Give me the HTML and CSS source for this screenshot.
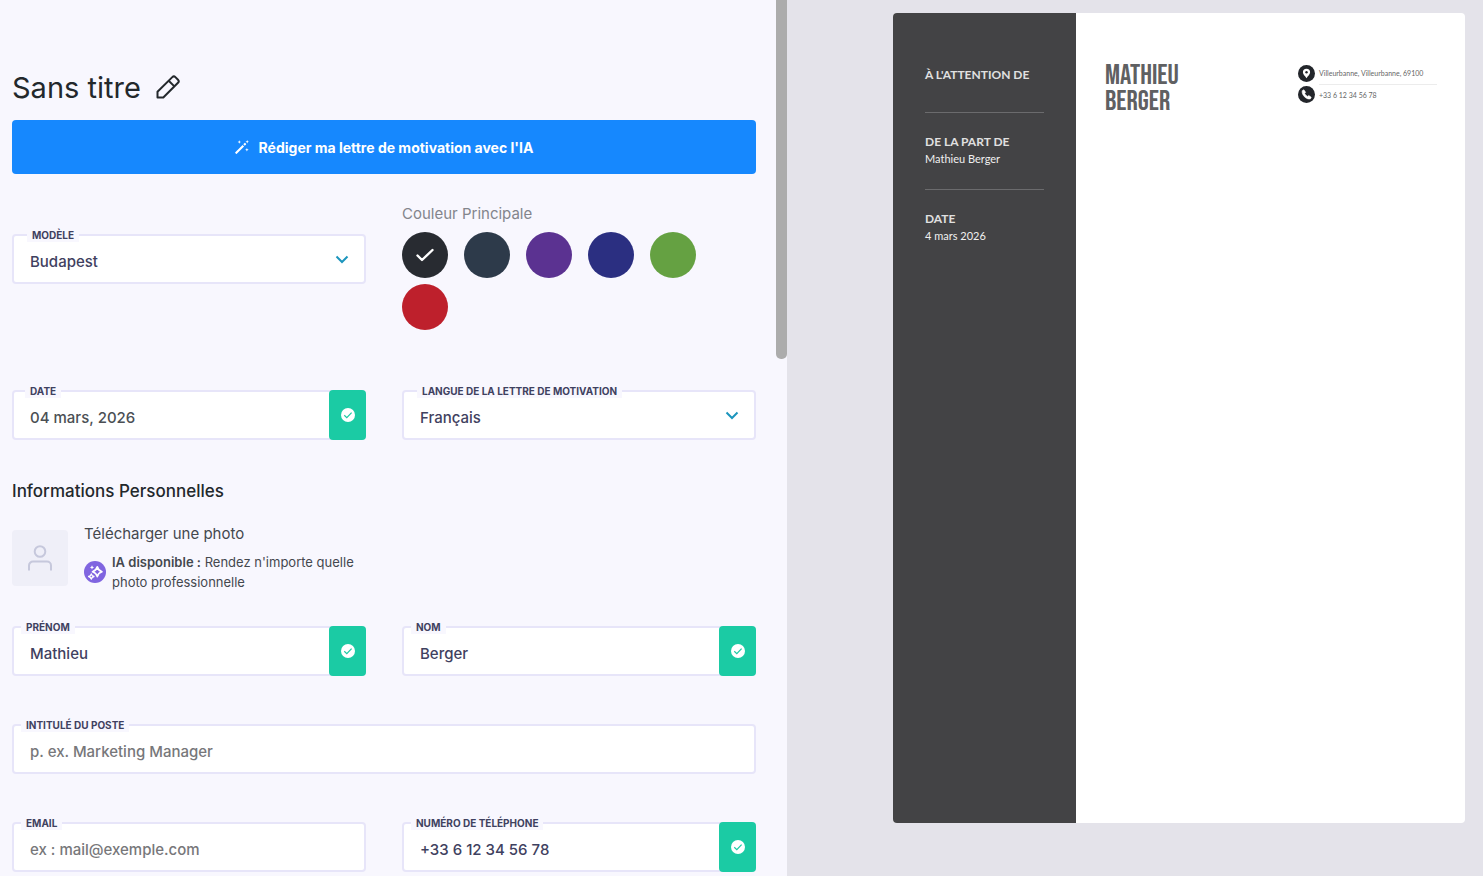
FILE: index.html
```html
<!DOCTYPE html>
<html lang="fr">
<head>
    <meta charset="UTF-8">
    <meta name="viewport" content="width=device-width, initial-scale=1.0">
    <title>Lettre de motivation</title>
    <link rel="stylesheet" href="styles.css">
</head>
<body>
    <!-- Shared icons -->
    <svg class="sprite" aria-hidden="true">
        <symbol id="chevron" viewBox="0 0 14 9">
            <path d="M1.5 1.5L7 7l5.500-5.500" fill="none" stroke="currentColor" stroke-width="2"/>
        </symbol>
        <symbol id="valid" viewBox="0 0 14 14">
            <circle cx="7" cy="7" r="7" fill="#fff"/>
            <path d="M3.300 7.300l2.500 2.300 4.800-5" fill="none" stroke="#1bcba4" stroke-width="1.200"/>
        </symbol>
    </svg>

    <div class="app">
        <main class="editor">
            <form class="form">
                <div class="title-row">
                    <h1>Sans titre</h1>
                    <button type="button" class="icon-button" aria-label="Modifier le titre">
                        <svg width="24" height="24" viewBox="0 0 24 24" fill="none" stroke="#23282c" stroke-width="2" stroke-linejoin="round">
                            <path d="M1.500 22.500v-5.800L16.300 2.100a2.200 2.200 0 0 1 3.100 0l2.600 2.600a2.200 2.200 0 0 1 0 3.100L7.300 22.500z"/>
                            <path d="M12.700 5.700l5.700 5.700"/>
                        </svg>
                    </button>
                </div>

                <button type="button" class="ai-button">
                    <svg width="14" height="14" viewBox="0 0 14 14" fill="#fff">
                        <path d="M0.300 12.200L7.600 4.900l1.500 1.500-7.300 7.300a.6.6 0 0 1-.8 0l-.7-.7a.6.6 0 0 1 0-.8z"/>
                        <path d="M8.300 4.200L9.500 3a.6.6 0 0 1 .8 0l.7.7a.6.6 0 0 1 0 .8L9.800 5.700z"/>
                        <path d="M4.300.3l.5 1.200 1.200.5-1.200.5-.5 1.200-.5-1.200L2.600 2l1.200-.5zM12.200 0l.5 1.200 1.200.5-1.200.5-.5 1.200-.5-1.200-1.200-.5 1.200-.5zM11.900 8l.5 1.300 1.300.5-1.300.5-.5 1.300-.5-1.300-1.300-.5 1.300-.5z"/>
                    </svg>
                    Rédiger ma lettre de motivation avec l'IA
                </button>

                <div class="grid design">
                    <div class="field">
                        <label class="wide" for="template">Modèle</label>
                        <select id="template"><option>Budapest</option></select>
                        <svg class="chevron" width="14" height="9"><use href="#chevron"/></svg>
                    </div>
                    <fieldset class="colors">
                        <legend>Couleur Principale</legend>
                        <div class="swatches">
                            <label class="swatch black">
                                <input type="radio" name="color" aria-label="Noir" checked>
                                <svg width="18" height="14" viewBox="0 0 18 14" fill="none" stroke="#fff" stroke-width="2.400" stroke-linecap="round" stroke-linejoin="round"><path d="M1.500 7.500l4.500 4.500L16.500 2"/></svg>
                            </label>
                            <label class="swatch slate"><input type="radio" name="color" aria-label="Ardoise"></label>
                            <label class="swatch purple"><input type="radio" name="color" aria-label="Violet"></label>
                            <label class="swatch blue"><input type="radio" name="color" aria-label="Bleu"></label>
                            <label class="swatch green"><input type="radio" name="color" aria-label="Vert"></label>
                            <label class="swatch red"><input type="radio" name="color" aria-label="Rouge"></label>
                        </div>
                    </fieldset>
                </div>

                <div class="grid">
                    <div class="field">
                        <label class="medium" for="date">Date</label>
                        <input class="date" type="text" id="date" value="04 mars, 2026">
                        <span class="valid"><svg width="14" height="14"><use href="#valid"/></svg></span>
                    </div>
                    <div class="field">
                        <label class="wide" for="language">Langue de la lettre de motivation</label>
                        <select id="language"><option>Français</option></select>
                        <svg class="chevron" width="14" height="9"><use href="#chevron"/></svg>
                    </div>
                </div>

                <h2>Informations Personnelles</h2>

                <div class="photo">
                    <button type="button" class="avatar" aria-label="Ajouter une photo">
                        <svg width="24" height="26" viewBox="0 0 24 26" fill="none" stroke="#c6c8dc" stroke-width="2">
                            <circle cx="12" cy="6.500" r="5.300"/>
                            <path d="M1 25.500v-5a4 4 0 0 1 4-4h14a4 4 0 0 1 4 4v5"/>
                        </svg>
                    </button>
                    <div class="photo-text">
                        <p class="photo-title">Télécharger une photo</p>
                        <div class="photo-ai">
                            <svg width="22" height="22" viewBox="0 0 22 22">
                                <circle cx="11" cy="11" r="11" fill="#8065e0"/>
                                <path d="M13.300 5.800c.7 3 1.700 4 4.700 4.900-3 .9-4 1.900-4.700 4.900-.8-3-1.800-4-4.800-4.900 3-.9 4-1.900 4.800-4.900z" fill="none" stroke="#fff" stroke-width="1.700" stroke-linejoin="round"/>
                                <path d="M7.300 12.800c.4 1.700 1 2.300 2.700 2.700-1.700.4-2.300 1-2.700 2.700-.4-1.700-1-2.300-2.700-2.700 1.700-.4 2.300-1 2.700-2.700z" fill="none" stroke="#fff" stroke-width="1.300" stroke-linejoin="round"/>
                                <path d="M8 4.300l.7 1.400 1.400.7-1.400.7L8 8.500l-.7-1.400-1.400-.7 1.400-.7z" fill="#fff"/>
                            </svg>
                            <p><strong>IA disponible :</strong> Rendez n'importe quelle photo professionnelle</p>
                        </div>
                    </div>
                </div>

                <div class="grid">
                    <div class="field">
                        <label for="firstname">Prénom</label>
                        <input type="text" id="firstname" value="Mathieu">
                        <span class="valid"><svg width="14" height="14"><use href="#valid"/></svg></span>
                    </div>
                    <div class="field">
                        <label for="lastname">Nom</label>
                        <input type="text" id="lastname" value="Berger">
                        <span class="valid"><svg width="14" height="14"><use href="#valid"/></svg></span>
                    </div>
                    <div class="field full">
                        <label for="job">Intitulé du poste</label>
                        <input type="text" id="job" placeholder="p. ex. Marketing Manager">
                    </div>
                    <div class="field">
                        <label for="email">Email</label>
                        <input type="email" id="email" placeholder="ex : mail@exemple.com">
                    </div>
                    <div class="field">
                        <label for="phone">Numéro de téléphone</label>
                        <input type="tel" id="phone" value="+33 6 12 34 56 78">
                        <span class="valid"><svg width="14" height="14"><use href="#valid"/></svg></span>
                    </div>
                </div>
            </form>
            <div class="scroll-thumb"></div>
        </main>

        <section class="preview">
            <article class="letter">
                <aside class="letter-side">
                    <div class="block">
                        <h3>À l'attention de</h3>
                    </div>
                    <div class="block">
                        <h3>De la part de</h3>
                        <p>Mathieu Berger</p>
                    </div>
                    <div class="block">
                        <h3>Date</h3>
                        <p>4 mars 2026</p>
                    </div>
                </aside>
                <header class="letter-head">
                    <div class="name">Mathieu Berger</div>
                    <ul class="contact">
                        <li>
                            <svg width="17" height="17" viewBox="0 0 17 17">
                                <circle cx="8.500" cy="8.500" r="8.500" fill="#23262b"/>
                                <path d="M8.500 3.700a3.600 3.600 0 0 0-3.600 3.600c0 2.300 2.100 3.500 3.600 6 1.500-2.500 3.600-3.700 3.600-6a3.600 3.600 0 0 0-3.600-3.600z" fill="#fff"/>
                                <circle cx="8.500" cy="7.300" r="1.200" fill="#23262b"/>
                            </svg>
                            <span>Villeurbanne, Villeurbanne, 69100</span>
                        </li>
                        <li>
                            <svg width="17" height="17" viewBox="0 0 17 17">
                                <circle cx="8.500" cy="8.500" r="8.500" fill="#23262b"/>
                                <path d="M4.200 4.700l1.700-.9 1.700 2.500-.9 1.200c.6 1.300 1.500 2.200 2.900 2.900l1.200-.9 2.400 1.700-.8 1.700c-4 1-9-4-8.200-8.200z" fill="#fff" stroke="#fff" stroke-width=".6" stroke-linejoin="round"/>
                            </svg>
                            <span>+33 6 12 34 56 78</span>
                        </li>
                    </ul>
                </header>
            </article>
        </section>
    </div>
</body>
</html>
```
FILE: styles.css
```css
* {
    margin: 0;
    padding: 0;
    box-sizing: border-box;
}

body {
    font-family: Inter, "Open Sans", sans-serif;
    color: #23282c;
    background: #e4e3ea;
}

button,
input,
select {
    font-family: inherit;
}

.sprite {
    display: none;
}

.app {
    display: grid;
    grid-template-columns: 787fr 696fr;
    height: 100vh;
    overflow: hidden;
}

/* Editor */
.editor {
    position: relative;
    background: #f8f7fe;
    overflow: hidden;
}

.form {
    height: 100%;
    padding: 68px 31px 32px 12px;
    overflow-y: auto;
    scrollbar-width: none;
}

.scroll-thumb {
    position: absolute;
    top: 0;
    right: 0;
    width: 11px;
    height: 41%;
    background: #acacac;
    border-radius: 0 0 5px 5px;
}

.title-row {
    display: flex;
    align-items: center;
    gap: 15px;
    height: 38px;
    margin-bottom: 14px;
}

h1 {
    font-size: 29px;
    font-weight: 400;
}

.icon-button {
    display: flex;
    background: none;
    border: none;
    cursor: pointer;
}

.ai-button {
    display: flex;
    align-items: center;
    justify-content: center;
    gap: 10px;
    width: 100%;
    height: 54px;
    margin-bottom: 30px;
    font-size: 14px;
    font-weight: 700;
    color: #fff;
    background: #1688fe;
    border: none;
    border-radius: 4px;
    cursor: pointer;
}

.grid {
    display: grid;
    grid-template-columns: 1fr 1fr;
    gap: 48px 36px;
}

.design {
    align-items: start;
    margin-bottom: 60px;
}

.design .field {
    margin-top: 30px;
}

.field {
    position: relative;
}

.full {
    grid-column: 1 / -1;
}

.field label {
    position: absolute;
    top: -6px;
    left: 9px;
    padding: 0 5px;
    font-size: 10px;
    line-height: 14px;
    font-weight: 700;
    text-transform: uppercase;
    color: #3f4160;
    background: #f8f7fe;
}

.field label.medium {
    left: 13px;
}

.field label.wide {
    left: 15px;
}

.field input,
.field select {
    display: block;
    width: 100%;
    height: 50px;
    padding: 5px 16px 0;
    font-size: 15px;
    font-weight: 500;
    color: #3f4160;
    background: #fff;
    border: 2px solid #e7e5f9;
    border-radius: 4px;
    appearance: none;
}

.field .date {
    color: #4b4f54;
}

.field input::placeholder {
    color: #77777a;
}

.chevron {
    position: absolute;
    top: 21px;
    right: 17px;
    color: #1c95bd;
    pointer-events: none;
}

.valid {
    position: absolute;
    top: 0;
    right: 0;
    display: flex;
    align-items: center;
    justify-content: center;
    width: 37px;
    height: 50px;
    background: #1bcba4;
    border-radius: 4px;
}

.colors {
    border: none;
}

.colors legend {
    margin-bottom: 8px;
    font-size: 15px;
    line-height: 20px;
    color: #83858c;
}

.swatches {
    display: flex;
    flex-wrap: wrap;
    gap: 6px 16px;
}

.swatch {
    display: grid;
    place-items: center;
    width: 46px;
    height: 46px;
    border-radius: 50%;
    cursor: pointer;
}

.swatch input,
.swatch svg {
    grid-area: 1 / 1;
}

.swatch input {
    width: 46px;
    height: 46px;
    border-radius: 50%;
    appearance: none;
}

.black { background: #282b31; }
.slate { background: #2d3a4a; }
.purple { background: #5b3291; }
.blue { background: #2b2f81; }
.green { background: #65a142; }
.red { background: #be202c; }

h2 {
    margin: 40px 0 28px;
    font-size: 17px;
    line-height: 22px;
    font-weight: 500;
}

.photo {
    display: flex;
    align-items: center;
    gap: 16px;
    height: 56px;
    margin-bottom: 40px;
}

.avatar {
    display: flex;
    align-items: center;
    justify-content: center;
    width: 56px;
    height: 56px;
    background: #efeff8;
    border: none;
    border-radius: 4px;
    cursor: pointer;
}

.photo-text {
    color: #44484e;
}

.photo-title {
    margin-bottom: 8px;
    font-size: 15px;
    line-height: 20px;
}

.photo-ai {
    display: flex;
    align-items: center;
    gap: 6px;
    max-width: 288px;
    font-size: 13px;
    line-height: 20px;
}

.photo-ai svg {
    flex: none;
}

.photo-ai strong {
    font-weight: 600;
}

/* Letter preview */
.preview {
    padding: 13px 18px 0 106px;
}

.letter {
    display: grid;
    grid-template-columns: 32% 68%;
    aspect-ratio: 572 / 810;
    font-family: Lato, sans-serif;
    background: #fff;
    border-radius: 4px;
    overflow: hidden;
}

.letter-side {
    padding: 53px 32px;
    color: #f0f0f0;
    background: #434345;
}

.block {
    margin-bottom: 20px;
    padding-bottom: 22px;
    font-size: 11px;
    line-height: 17px;
    border-bottom: 1px solid #6b6b6d;
}

.block:first-child {
    padding-bottom: 29px;
}

.block:last-child {
    border-bottom: none;
}

.block h3 {
    font-size: 12px;
    line-height: 17px;
    font-weight: 700;
    text-transform: uppercase;
    color: #e0e0e0;
}

.letter-head {
    display: flex;
    justify-content: space-between;
    align-items: flex-start;
    padding: 50px 28px 0 29px;
}

.name {
    width: min-content;
    font-family: "Bebas Neue", "Roboto Condensed", "Liberation Sans Narrow", "Liberation Sans", sans-serif;
    font-size: 28px;
    line-height: 26px;
    font-weight: 400;
    text-transform: uppercase;
    color: #5f6062;
}

.contact {
    width: 139px;
    margin-top: 2px;
    list-style: none;
    font-size: 7px;
    color: #666;
}

.contact li {
    display: flex;
    align-items: center;
    gap: 4px;
    height: 17px;
    margin-bottom: 4px;
    white-space: nowrap;
}

.contact li:first-child span {
    flex: 1;
    margin-bottom: -4px;
    padding: 3px 0 7px;
    border-bottom: 1px solid #ececec;
}
```
